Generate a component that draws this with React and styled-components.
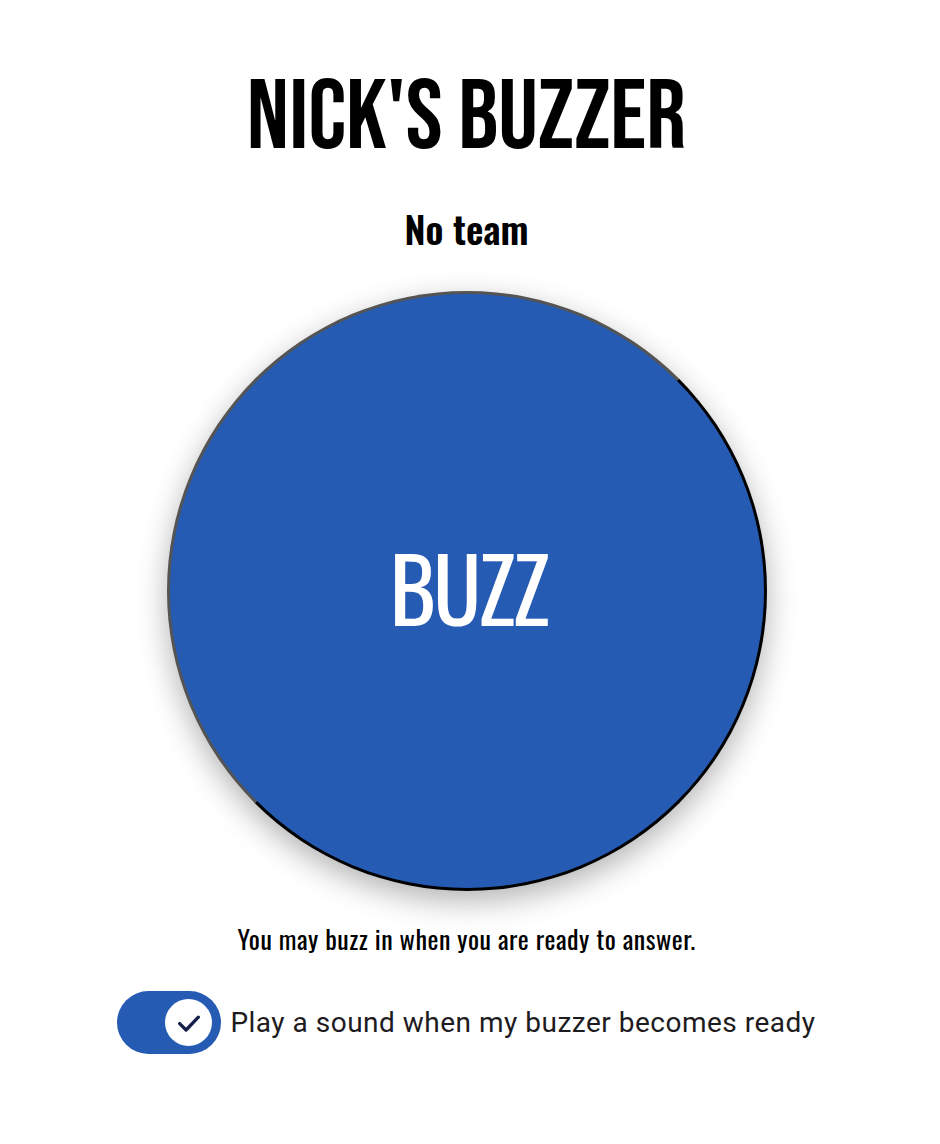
import React from "react";
import styled, { createGlobalStyle } from "styled-components";

const Global = createGlobalStyle`
  html, body { margin: 0; padding: 0; background: #fff; }
  body { font-family: "Roboto", "Liberation Sans", sans-serif; }
`;

const Page = styled.main`
  display: flex;
  flex-direction: column;
  align-items: center;
  padding: 69px 7px 0 0;
`;

const Title = styled.h1`
  margin: 0;
  font-family: "Bebas Neue", "Oswald", sans-serif;
  font-weight: 400;
  font-size: 99px;
  line-height: 99px;
  color: #000;
`;

const Team = styled.h2`
  margin: 38px 0 0;
  font-family: "Oswald", "Roboto Condensed", sans-serif;
  font-weight: 600;
  font-size: 38px;
  line-height: 44px;
  color: #000;
`;

const BuzzButton = styled.button`
  margin-top: 41px;
  width: 600px;
  height: 600px;
  border-radius: 50%;
  border: 3px outset #000;
  background: #265bb4;
  color: #fff;
  font-family: "Oswald", "Bebas Neue", sans-serif;
  font-weight: 380;
  font-size: 89px;
  line-height: 1;
  letter-spacing: -3px;
  padding: 0 0 9px 3px;
  box-shadow: 0 10px 30px rgba(0, 0, 0, 0.3);
  cursor: pointer;
`;

const Hint = styled.p`
  margin: 32px 0 0;
  font-family: "Oswald", "Roboto Condensed", sans-serif;
  font-weight: 400;
  font-size: 26px;
  line-height: 32px;
  letter-spacing: 0.5px;
  color: #000;
`;

const ToggleRow = styled.label`
  margin-top: 36px;
  display: flex;
  align-items: center;
  gap: 9px;
  cursor: pointer;
`;

const Track = styled.span`
  display: inline-flex;
  align-items: center;
  justify-content: ${(p) => (p.$on ? "flex-end" : "flex-start")};
  width: 104px;
  height: 63px;
  border-radius: 32px;
  background: ${(p) => (p.$on ? "#265bb4" : "#79747e")};
  padding: 0 9px;
  box-sizing: border-box;
`;

const Knob = styled.span`
  width: 47px;
  height: 47px;
  border-radius: 50%;
  background: #fff;
  display: flex;
  align-items: center;
  justify-content: center;
`;

const Label = styled.span`
  font-family: "Roboto", "Liberation Sans", sans-serif;
  font-size: 28px;
  color: #1d1b20;
  letter-spacing: 0.5px;
`;

export default function App() {
  const [on, setOn] = React.useState(true);
  return (
    <>
      <Global />
      <Page>
        <Title>NICK'S BUZZER</Title>
        <Team>No team</Team>
        <BuzzButton>BUZZ</BuzzButton>
        <Hint>You may buzz in when you are ready to answer.</Hint>
        <ToggleRow onClick={() => setOn(!on)}>
          <Track $on={on}>
            <Knob>
              {on && (
                <svg width="28" height="28" viewBox="0 0 24 24" fill="none">
                  <path
                    d="M4 12.5l5.5 5.5 10.5-11"
                    stroke="#14204a"
                    strokeWidth="2.8"
                    strokeLinecap="round"
                    strokeLinejoin="round"
                  />
                </svg>
              )}
            </Knob>
          </Track>
          <Label>Play a sound when my buzzer becomes ready</Label>
        </ToggleRow>
      </Page>
    </>
  );
}
